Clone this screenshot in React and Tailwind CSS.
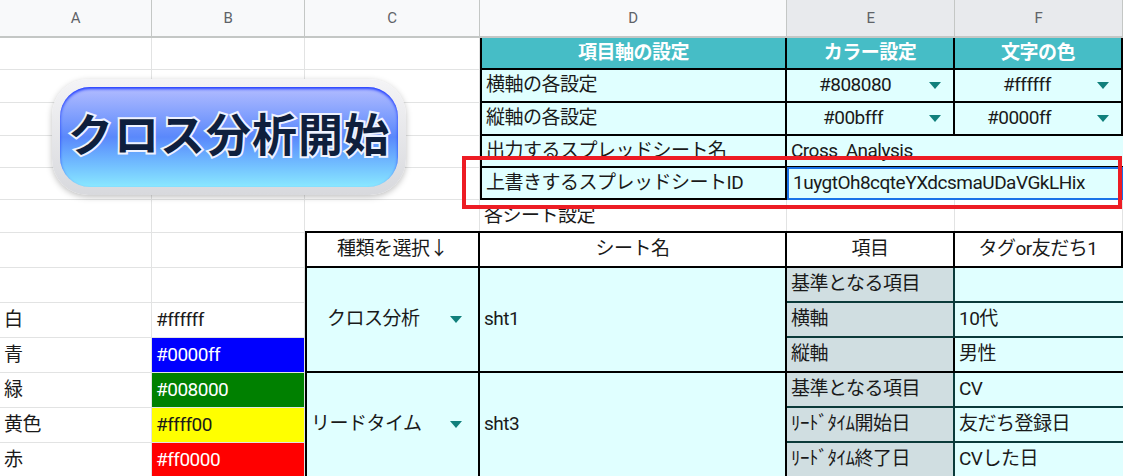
const F = { fontFamily: 'Roboto, "Noto Sans CJK JP", sans-serif' }

function Tri() {
  return <span className="ml-auto shrink-0 w-0 h-0 border-l-[6px] border-r-[6px] border-t-[7px] border-l-transparent border-r-transparent border-t-[#11807c]" />
}

function C({ c, r, cs = 1, rs = 1, className = '', children }) {
  return (
    <div
      className={'flex items-center overflow-hidden whitespace-nowrap text-[19px] tracking-[-0.5px] text-[#1a1a1a] ' + className}
      style={{ gridColumn: `${c} / span ${cs}`, gridRow: `${r} / span ${rs}` }}
    >
      {children}
    </div>
  )
}

const g = 'border-r border-b border-[#e2e3e3] bg-white'
const bk = 'border-r-2 border-b-2 border-black'
const cy = 'bg-[#e0ffff]'
const gy = 'bg-[#d0dee1]'

export default function App() {
  const letters = ['A', 'B', 'C', 'D', 'E', 'F']
  const colorRows = [
    ['白', '#ffffff', 'bg-white text-[#1a1a1a]'],
    ['青', '#0000ff', 'bg-[#0000ff] text-white'],
    ['緑', '#008000', 'bg-[#008000] text-white'],
    ['黄色', '#ffff00', 'bg-[#ffff00] text-[#1a1a1a]'],
    ['赤', '#ff0000', 'bg-[#ff0000] text-white'],
  ]
  return (
    <div className="relative w-[1123px] h-[476px] overflow-hidden bg-white" style={F}>
      <div className="grid grid-cols-[152px_153px_175px_307px_168px_168px] grid-rows-[38px_32px_33px_33px_32px_32px_33px_35px_35px_35px_35px_35px_35px_35px]">
        {letters.map((l, i) => (
          <C key={l} c={i + 1} r={1} className={`justify-center !text-[15px] !text-[#5f6368] border-r border-b-2 border-[#c4c7c5] ${i >= 4 ? 'bg-[#e8eaed]' : 'bg-[#f8f9fa]'}`}>{l}</C>
        ))}
        {[2, 3, 4, 5, 6, 7].map(r => [1, 2, 3].map(c => <C key={r + '-' + c} c={c} r={r} className={g} />))}
        <C c={4} r={2} className={`justify-center bg-[#46bdc6] !text-white font-bold ${bk} border-l-2`}>項目軸の設定</C>
        <C c={5} r={2} className={`justify-center bg-[#46bdc6] !text-white font-bold ${bk}`}>カラー設定</C>
        <C c={6} r={2} className={`justify-center bg-[#46bdc6] !text-white font-bold ${bk}`}>文字の色</C>
        <C c={4} r={3} className={`px-1 ${cy} ${bk} border-l-2`}>横軸の各設定</C>
        <C c={5} r={3} className={`pl-8 pr-3 ${cy} ${bk}`}>#808080<Tri /></C>
        <C c={6} r={3} className={`pl-12 pr-3 ${cy} ${bk}`}>#ffffff<Tri /></C>
        <C c={4} r={4} className={`px-1 ${cy} ${bk} border-l-2`}>縦軸の各設定</C>
        <C c={5} r={4} className={`pl-9 pr-3 ${cy} ${bk}`}>#00bfff<Tri /></C>
        <C c={6} r={4} className={`pl-8 pr-3 ${cy} ${bk}`}>#0000ff<Tri /></C>
        <C c={4} r={5} className={`px-1 ${cy} ${bk} border-l-2`}>出力するスプレッドシート名</C>
        <C c={5} r={5} cs={2} className={`px-1 ${cy} border-b-2 border-black`}>Cross_Analysis</C>
        <C c={4} r={6} className={`px-1 ${cy} ${bk} border-l-2`}>上書きするスプレッドシートID</C>
        <C c={5} r={6} cs={2} className={`px-1 ${cy} border-2 border-[#1a73e8] -mt-px`}>1uygtOh8cqteYXdcsmaUDaVGkLHix</C>
        <C c={4} r={7} className={`px-1 ${g}`}>各シート設定</C>
        <C c={5} r={7} className={g} />
        <C c={6} r={7} className={g} />
        <C c={3} r={8} className={`justify-center bg-white ${bk} border-l-2 border-t-2 -mt-[2px]`}>種類を選択↓</C>
        <C c={4} r={8} className={`justify-center bg-white ${bk} border-t-2 -mt-[2px]`}>シート名</C>
        <C c={5} r={8} className={`justify-center bg-white ${bk} border-t-2 -mt-[2px]`}>項目</C>
        <C c={6} r={8} className={`justify-center bg-white ${bk} border-t-2 -mt-[2px]`}>タグor友だち1</C>
        <C c={1} r={8} className={g} />
        <C c={2} r={8} className={g} />
        <C c={1} r={9} className={g} />
        <C c={2} r={9} className={g} />
        {colorRows.map(([n, hex, cls], i) => (
          <>
            <C key={n} c={1} r={10 + i} className={`px-1 ${g}`}>{n}</C>
            <C key={hex} c={2} r={10 + i} className={`px-1 border-r border-b border-[#e2e3e3] ${cls}`}>{hex}</C>
          </>
        ))}
        <C c={3} r={9} rs={3} className={`pl-5 pr-4 ${cy} ${bk} border-l-2`}>クロス分析<Tri /></C>
        <C c={4} r={9} rs={3} className={`px-1 ${cy} ${bk}`}>sht1</C>
        <C c={3} r={12} rs={3} className={`pl-1 pr-4 ${cy} ${bk} border-l-2`}>リードタイム<Tri /></C>
        <C c={4} r={12} rs={3} className={`px-1 ${cy} ${bk}`}>sht3</C>
        {[
          ['基準となる項目', ''], ['横軸', '10代'], ['縦軸', '男性'],
          ['基準となる項目', 'CV'], ['ﾘｰﾄﾞﾀｲﾑ開始日', '友だち登録日'], ['ﾘｰﾄﾞﾀｲﾑ終了日', 'CVした日'],
        ].map(([a, b], i) => (
          <>
            <C key={'e' + i} c={5} r={9 + i} className={`px-1 ${gy} border-r-2 border-b-2 ${i === 2 ? 'border-black' : 'border-[#0b3a3a]'}`}>{a}</C>
            <C key={'f' + i} c={6} r={9 + i} className={`px-1 ${cy} border-b-2 ${i === 2 ? 'border-black' : 'border-[#0b3a3a]'}`}>{b}</C>
          </>
        ))}
      </div>

      <div className="absolute left-[52px] top-[79px] w-[354px] h-[116px] rounded-[36px] bg-gradient-to-b from-[#f4f4f6] to-[#d8d9dd] shadow-[0_2px_6px_rgba(0,0,0,0.25)] p-[8px]">
        <div className="w-full h-full rounded-[30px] bg-gradient-to-b from-[#b3bcff] via-[#5a88fb] to-[#8ae8ff] shadow-[inset_0_2px_3px_#1f3cff] flex items-center justify-center">
          <span className="text-[45px] font-bold text-[#0f1f3d] tracking-[1px] [-webkit-text-stroke:4px_#eef2ff] [paint-order:stroke_fill]">クロス分析開始</span>
        </div>
      </div>

      <div className="absolute left-[462px] top-[156px] w-[660px] h-[53px] border-4 border-[#ed1c24]" />
    </div>
  )
}
